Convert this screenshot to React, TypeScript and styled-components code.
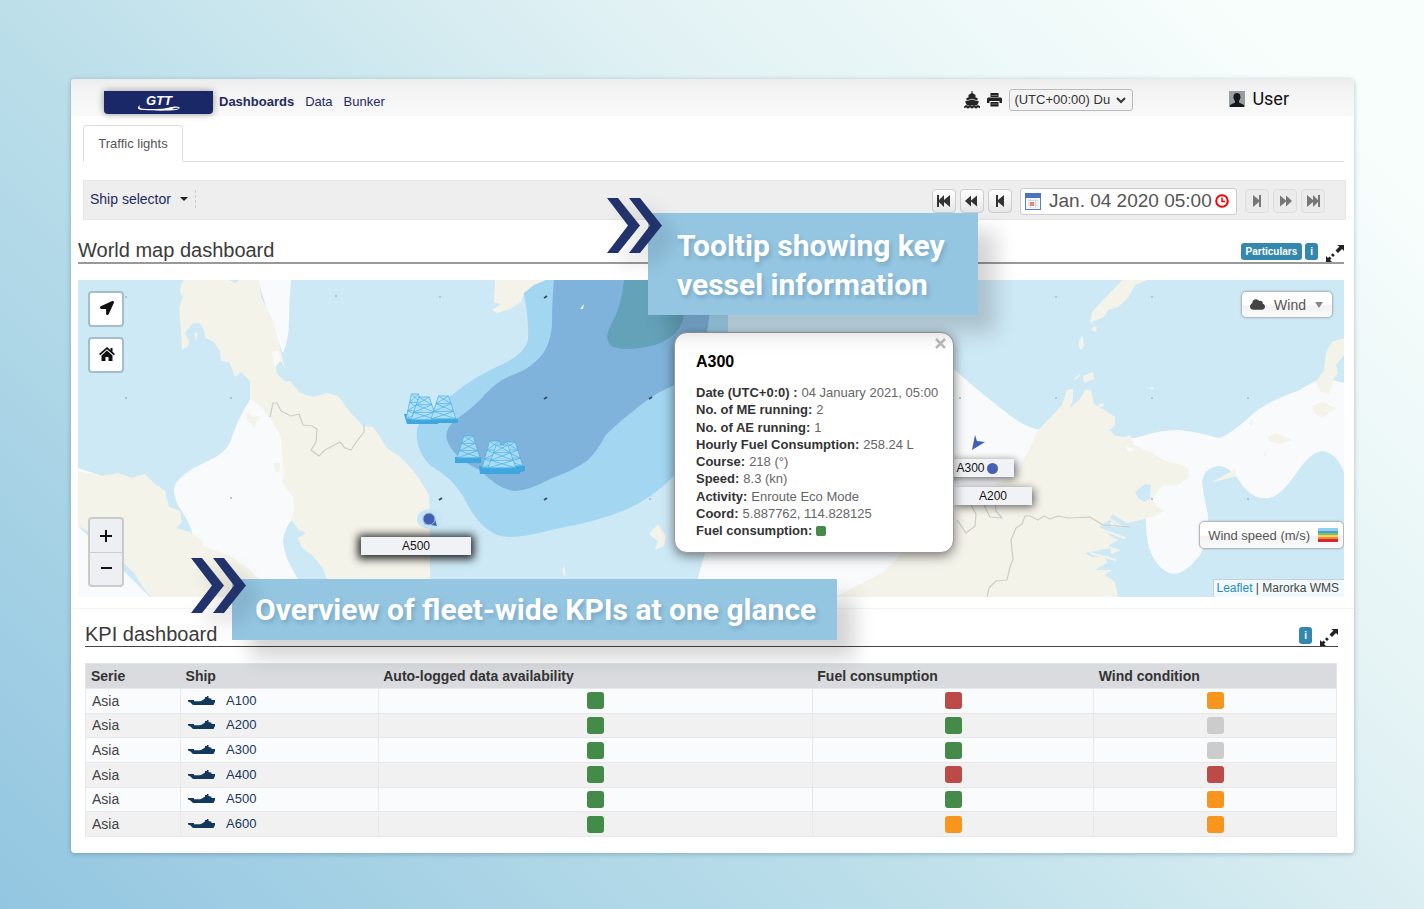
import React from "react";
import styled, { createGlobalStyle } from "styled-components";
import { FaLocationArrow, FaCloud } from "react-icons/fa";

const GlobalStyle = createGlobalStyle`
  *, *::before, *::after { box-sizing: border-box; }
  html { min-height: 100%; background: linear-gradient(45deg, #93c6e1 0%, #bcdfea 39%, #e2f2f4 66%, #f8fefc 92%); }
  body { margin: 0; font-family: "Liberation Sans", Arial, sans-serif; font-size: 14px; color: #333; }
  button, input, select { font-family: inherit; }
  h1, h2, h3, p, ul, dl, dd { margin: 0; padding: 0; font-weight: normal; }
  svg { display: block; }
`;

const Page = styled.div`
  padding: 79px 70px 56px 71px;
`;

const Card = styled.main`
  position: relative;
  background: #fff;
  border-radius: 4px;
  padding-bottom: 16px;
  box-shadow: 0 1px 5px rgba(40, 80, 100, 0.35);
`;

/* Header */

const Header = styled.header`
  display: flex;
  align-items: center;
  height: 37px;
  padding: 0 64px 0 33px;
  border-radius: 4px 4px 0 0;
  background: linear-gradient(#ededed, #f3f3f3 30%, #f9f9f9);
`;

const Logo = styled.a`
  display: flex;
  justify-content: center;
  width: 109px;
  height: 23px;
  margin: 9px 6px 0 0;
  border-radius: 0 0 4px 4px;
  background: #1a2868;
  box-shadow: 0 0 7px rgba(0, 0, 0, 0.4);
`;

const Nav = styled.nav`
  display: flex;
  gap: 11px;
  margin-top: 8px;
`;

const NavLink = styled.a<{ $active?: boolean }>`
  color: #1f2a60;
  font-size: 13px;
  line-height: 16px;
  text-decoration: none;
  font-weight: ${(p) => (p.$active ? "bold" : "normal")};
`;

const HeaderTools = styled.div`
  display: flex;
  align-items: center;
  gap: 7px;
  margin: 4px 96px 0 auto;
  color: #222;
`;

const PlainButton = styled.button`
  display: flex;
  padding: 0;
  border: 0;
  background: none;
  color: inherit;
`;

const SelectWrap = styled.span`
  display: flex;
  align-items: center;
  svg { margin: 0 7px 0 -17px; pointer-events: none; }
`;

const ZoneSelect = styled.select`
  appearance: none;
  width: 124px;
  height: 22px;
  padding: 0 18px 0 4px;
  border: 1px solid #bbb;
  border-radius: 3px;
  background: #f4f4f4;
  color: #333;
  font-size: 13px;
`;

const User = styled.button`
  display: flex;
  align-items: center;
  gap: 7px;
  margin: 2px 1px 0 0;
  padding: 0;
  border: 0;
  background: none;
  color: #111;
  font-family: Roboto, sans-serif;
  font-size: 18px;
  line-height: 20px;
`;

/* Tabs and toolbar */

const Tabs = styled.div`
  display: flex;
  margin: 9px 10px 0 12px;
  border-bottom: 1px solid #ddd;
`;

const Tab = styled.button`
  width: 100px;
  height: 37px;
  margin-bottom: -1px;
  padding: 0;
  border: 1px solid #ddd;
  border-bottom-color: #fff;
  border-radius: 4px 4px 0 0;
  background: #fff;
  color: #555;
  font-size: 13px;
`;

const Toolbar = styled.div`
  display: flex;
  align-items: center;
  height: 40px;
  margin: 18px 8px 0 12px;
  padding: 2px 20px 0 6px;
  border: 1px solid #e5e5e5;
  background: #eee;
`;

const ShipSelector = styled.button`
  display: flex;
  align-items: center;
  gap: 9px;
  height: 18px;
  margin-top: -4px;
  padding: 0 7px 0 0;
  border: 0;
  border-right: 1px dashed #ccc;
  background: none;
  color: #1f2a60;
  font-size: 14px;
`;

const StepGroup = styled.div<{ $start?: boolean }>`
  display: flex;
  gap: 4px;
  margin-left: ${(p) => (p.$start ? "auto" : "0")};
`;

const StepButton = styled.button`
  display: flex;
  align-items: center;
  justify-content: center;
  width: 24px;
  height: 24px;
  padding: 0;
  border: 1px solid #ccc;
  border-radius: 4px;
  background: linear-gradient(#fff, #e6e6e6);
  color: #333;
  &:disabled { background: #ebebeb; border-color: #ddd; color: #777; }
`;

const DateField = styled.label`
  display: flex;
  align-items: center;
  width: 217px;
  height: 27px;
  margin: 0 8px;
  padding: 0 7px 0 4px;
  border: 1px solid #ccc;
  border-radius: 3px;
  background: #fff;
`;

const DateInput = styled.input`
  flex: 1;
  min-width: 0;
  padding: 0 0 0 8px;
  border: 0;
  background: none;
  color: #555;
  font-size: 19px;
`;

/* Section headings */

const SectionHead = styled.div<{ $kpi?: boolean }>`
  display: flex;
  align-items: flex-end;
  gap: 3px;
  height: ${(p) => (p.$kpi ? "38px" : "44px")};
  margin: ${(p) => (p.$kpi ? "0 16px 0 14px" : "0 10px 0 7px")};
  border-bottom: ${(p) => (p.$kpi ? "1px solid #444" : "2px solid #999")};
`;

const SectionTitle = styled.h2`
  flex: 1;
  font-size: 20px;
  line-height: 24px;
  color: #3a3a3a;
`;

const Badge = styled.button`
  height: 17px;
  margin-bottom: 2px;
  padding: 0 5px;
  border: 0;
  border-radius: 3px;
  background: #3488ae;
  color: #fff;
  font-size: 10px;
  font-weight: bold;
  line-height: 17px;
`;

const ExpandButton = styled(PlainButton)`
  margin-left: 5px;
  color: #222;
`;

/* Map */

const MapPanel = styled.section`
  position: relative;
  height: 317px;
  margin: 16px 10px 11px 7px;
  overflow: hidden;
  background: #cee9f6;
`;

const MapDrawing = styled.svg`
  width: 100%;
  height: 100%;
`;

const MapControls = styled.div`
  position: absolute;
  top: 11px;
  left: 10px;
  bottom: 10px;
  display: flex;
  flex-direction: column;
  gap: 10px;
`;

const MapButton = styled.button`
  display: flex;
  align-items: center;
  justify-content: center;
  width: 36px;
  height: 36px;
  padding: 0 0 3px 1px;
  border: 2px solid #a3bfcd;
  border-radius: 4px;
  background: #fff;
  color: #111;
`;

const ZoomGroup = styled.div`
  display: flex;
  flex-direction: column;
  margin-top: auto;
  width: 36px;
  border: 2px solid #c9cbc6;
  border-radius: 4px;
  background: #eeeff2;
  overflow: hidden;
`;

const ZoomButton = styled.button`
  display: flex;
  align-items: center;
  justify-content: center;
  height: 33px;
  padding: 0;
  border: 0;
  background: none;
  & + & { border-top: 1px solid #ccc; }
`;

const FloatButton = styled.button`
  display: flex;
  align-items: center;
  border: 1px solid #b5b9bc;
  border-radius: 5px;
  background: linear-gradient(#fff 50%, #f2f2f2 55%, #fafafa);
  box-shadow: 0 0 2px rgba(0, 0, 0, 0.25);
  color: #555;
`;

const WindButton = styled(FloatButton)`
  position: absolute;
  top: 11px;
  right: 11px;
  height: 27px;
  gap: 9px;
  padding: 0 9px 0 8px;
  font-size: 14px;
`;

const LegendButton = styled(FloatButton)`
  position: absolute;
  top: 241px;
  right: 0;
  height: 28px;
  gap: 8px;
  padding: 0 5px 0 8px;
  font-size: 13px;
`;

const Attribution = styled.div`
  position: absolute;
  right: 0;
  bottom: 0;
  height: 18px;
  padding: 0 5px 0 3px;
  border: solid #c5cfd4;
  border-width: 1px 0 0 1px;
  background: #f1f9fc;
  font-size: 12px;
  line-height: 16px;
  color: #444;
  a { color: #2a8db5; text-decoration: none; }
`;

const ShipLabel = styled.div<{ $x: number; $y: number; $w: number; $dark?: boolean }>`
  position: absolute;
  left: ${(p) => p.$x}px;
  top: ${(p) => p.$y}px;
  display: flex;
  align-items: center;
  justify-content: center;
  gap: 2px;
  width: ${(p) => p.$w}px;
  height: 18px;
  background: #f1f2f5;
  color: #111;
  font-size: 12px;
  box-shadow: ${(p) => (p.$dark ? "0 1px 8px 3px rgba(0, 0, 0, 0.85)" : "2px 2px 8px rgba(0, 0, 0, 0.6)")};
`;

const ShipDot = styled.i`
  width: 11px;
  height: 11px;
  border-radius: 50%;
  background: #4460b0;
`;

const Popup = styled.article`
  position: absolute;
  left: 596px;
  top: 52px;
  width: 280px;
  height: 221px;
  padding: 20px 21px;
  border-radius: 13px;
  border: 1px solid #999;
  background: #fff;
  box-shadow: 0 3px 12px rgba(0, 0, 0, 0.5);
`;

const PopupTitle = styled.h3`
  margin-bottom: 13px;
  color: #000;
  font-size: 16px;
  font-weight: bold;
  line-height: 18px;
`;

const PopupClose = styled(PlainButton)`
  position: absolute;
  top: 5px;
  right: 7px;
  color: #bbb;
`;

const Facts = styled.dl`
  display: flex;
  flex-direction: column;
  justify-content: space-between;
  height: 155px;
`;

const Fact = styled.div`
  display: flex;
  align-items: center;
  gap: 4px;
  font-size: 13px;
  line-height: 17px;
  white-space: nowrap;
  dt { color: #333; font-weight: bold; }
  dd { color: #666; }
`;

/* KPI table */

const KpiSection = styled.section`
  border-top: 1px solid #f4f4f4;
`;

const TableWrap = styled.div`
  margin: 16px 17px 0 14px;
`;

const Table = styled.table`
  width: 100%;
  height: 174px;
  table-layout: fixed;
  border-collapse: collapse;
  border: 1px solid #e3e4e6;
`;

const HeadCell = styled.th<{ $w: string }>`
  width: ${(p) => p.$w};
  height: 25px;
  padding: 0 5px;
  background: #dadbdf;
  color: #333;
  font-size: 14px;
  line-height: 16px;
  text-align: left;
`;

const Row = styled.tr`
  background: #f9fbfd;
  &:nth-child(even) { background: #f1f1f2; }
`;

const Cell = styled.td`
  padding: 0 6px;
  border: 1px solid #e6e8ea;
  color: #444;
  font-size: 14px;
  line-height: 16px;
`;

const ShipLink = styled.a`
  display: flex;
  align-items: center;
  gap: 11px;
  color: #17365d;
  font-size: 13px;
  line-height: 16px;
  text-decoration: none;
`;

const Light = styled.span<{ $color: string; $small?: boolean }>`
  display: block;
  width: ${(p) => (p.$small ? "10px" : "17px")};
  height: ${(p) => (p.$small ? "10px" : "17px")};
  margin: 0 auto;
  border-radius: ${(p) => (p.$small ? "2px" : "3px")};
  background: ${(p) => p.$color};
`;

/* Callouts */

const Callout = styled.aside<{ $x: number; $y: number; $w: number; $pad: string }>`
  position: absolute;
  left: ${(p) => p.$x}px;
  top: ${(p) => p.$y}px;
  width: ${(p) => p.$w}px;
  padding: ${(p) => p.$pad};
  background: #94c6e2;
  box-shadow: 18px 18px 20px rgba(0, 0, 0, 0.17);
  color: #fff;
  font-family: Roboto, sans-serif;
  font-size: 30px;
  font-weight: bold;
  line-height: 39px;
  text-shadow: 2px 3px 4px rgba(60, 100, 130, 0.3);
`;

const Chevrons = styled.svg<{ $rise: number }>`
  position: absolute;
  left: -41px;
  top: ${(p) => -p.$rise}px;
  filter: drop-shadow(12px 12px 9px rgba(0, 0, 0, 0.16));
`;

type StepKind = "first" | "back" | "prev" | "next" | "forward" | "last";

const stepPaths: Record<StepKind, string> = {
  first: "M1 1h2v5l5-5v5l6-5v12l-6-5v5l-5-5v5h-2z",
  back: "M1 7l6-5.500v5l6-5v11l-6-5v5z",
  prev: "M4 1h2v5l6-5v12l-6-5v5h-2z",
  next: "M12 1h-2v5l-6-5v12l6-5v5h2z",
  forward: "M15 7l-6-5.500v5l-6-5v11l6-5v5z",
  last: "M15 1h-2v5l-5-5v5l-6-5v12l6-5v5l5-5v5h2z",
};

const StepIcon = ({ kind }: { kind: StepKind }) => (
  <svg width="16" height="14" viewBox="0 0 16 14" fill="currentColor"><path d={stepPaths[kind]} /></svg>
);

const ExpandIcon = () => (
  <svg width="18" height="18" viewBox="0 0 18 18" fill="currentColor">
    <path d="M11 1h7v6l-2-2-4 4-2.500-2.500 4-4zM0 12l2 2 1.500-1.500 2 2L4 16l2 2H0zM5 11l1.800-1.800 2 2L7 13z" />
  </svg>
);

const FleetIcon = () => (
  <svg width="16" height="18" viewBox="0 0 16 18" fill="currentColor">
    <path d="M7.500 0h1v2l3 2v2.500l2 .5v2.500L8 7.800 2.500 9.500V7l2-.5V4l3-2z" />
    <path d="M1 10.500l7-2 7 2-2 4H3z" />
    <path d="M0 16.500l2-1.500 2 1.500 2-1.500 2 1.500 2-1.500 2 1.500 2-1.500 2 1.500" fill="none" stroke="currentColor" strokeWidth="1.800" />
  </svg>
);

const PrintIcon = () => (
  <svg width="15" height="14" viewBox="0 0 15 14" fill="currentColor">
    <path d="M3.500 0h8v4h-8zM1 4.500h13l1 1V10h-2.500V8h-10v2H0V5.500zM3.500 9h8v4.500h-8z" />
    <path d="M4.500 2.500h6M4.500 11h6" stroke="#888" strokeWidth="0.800" />
  </svg>
);

const LogoDrawing = () => (
  <svg width="50" height="23" viewBox="0 0 50 23">
    <text x="12" y="14" fill="#fff" fontFamily="Liberation Sans, sans-serif" fontSize="13" fontWeight="bold" fontStyle="italic">GTT</text>
    <path d="M6 14c-4 3-2 5 4 5 8 .6 16 .8 26 .5 10 0 13-4 6-4-4 0-7 1.500-14 2.200-8 .6-14 .4-19 0-4-.5-4-2-3-3.700z" fill="#fff" />
    <path d="M38 18c3 .5 6 0 7-1-2-.6-5 0-7 1z" fill="#1a2868" />
  </svg>
);

const VesselIcon = () => (
  <svg width="28" height="12" viewBox="0 0 28 12">
    <path d="M1 5h6v1.200h6l2-.7 3-2V2h2V1h1.500v2l3 .8V5h3.500v2l-1.500 3H6L3.500 7.500 1 6.500z" fill="#12395b" />
  </svg>
);

const ChevronPair = ({ rise }: { rise: number }) => (
  <Chevrons $rise={rise} width="55" height="55" viewBox="0 0 55 55" fill="#22326b">
    <path d="M0 0h11l22 27.500L11 55H0l21-27.500zM22 0h11l22 27.500L33 55H22l21-27.500z" />
  </Chevrons>
);

const Tower = ({ x, y, w, h }: { x: number; y: number; w: number; h: number }) => {
  const px = (side: number, t: number) => x + w / 2 + side * (w / 5 + t * w * 0.3);
  const py = (t: number) => y + t * h;
  const d = `M${px(-1, 0)} ${py(0)}H${px(1, 0)}L${px(1, 1)} ${py(1)}H${px(-1, 1)}Z`;
  let braces = "";
  for (let i = 0; i < 3; i++) {
    const a = i / 3;
    const b = (i + 1) / 3;
    braces += `M${px(-1, a)} ${py(a)}L${px(1, b)} ${py(b)}M${px(1, a)} ${py(a)}L${px(-1, b)} ${py(b)}M${px(-1, b)} ${py(b)}H${px(1, b)}`;
  }
  return (
    <g stroke="#48b0e4" strokeWidth="0.700" fill="none">
      <path d={d} fill="#b2e0f7" fillOpacity="0.850" />
      <path d={braces} />
    </g>
  );
};

const faintDots = [[126, 297], [336, 296], [126, 398], [231, 398], [231, 498], [440, 297], [650, 499], [960, 398], [1056, 297], [1152, 297], [1056, 398], [1152, 398], [1248, 398], [1152, 499], [1248, 499]];
const windDots = [[545, 297], [545, 398], [650, 398], [440, 499], [545, 499]];

const MapArt = () => (
  <MapDrawing viewBox="78 280 1266 317" preserveAspectRatio="xMinYMid slice" aria-hidden="true">
    <rect x="78" y="280" width="2000" height="317" fill="#cee9f6" />
    <g fill="#f9fafc">
      <path d="M258 280H291Q289 300 289 320Q289 340 283 353L270 320Z" />
      <path d="M251 398Q237 420 231 440Q226 453 210 460Q174 476 174 490Q174 500 181 510Q191 524 194 540L230 597H310Q283 560 283 540Q284 530 292 519L305 470L284 420Z" />
      <path d="M78 468L102 476L78 490ZM78 526L150 597H78Z" />
      <path d="M693 597Q705 545 720 520L760 370H930Q945 360 956 371Q985 397 1015 419Q1030 429 1042 430L1112 435Q1128 441 1142 436Q1160 430 1178 430Q1195 431 1218 438Q1228 437 1255 412Q1265 403 1300 390Q1315 380 1325 378L1344 383V472Q1336 452 1322 451Q1312 452 1300 468Q1280 498 1268 498Q1252 500 1240 482Q1230 466 1218 466Q1204 468 1202 482Q1204 498 1208 515Q1209 540 1200 555Q1185 574 1174 574Q1158 572 1149 548Q1145 530 1146 510L1060 500L850 597Z" />
    </g>
    <path d="M545 280Q524 286 524 294Q529 320 528 340Q524 354 505 363Q470 379 455 393Q418 417 417 430Q415 451 431 466Q452 478 463 496Q483 538 510 537Q525 537 560 528Q595 522 625 510Q650 500 675 475Q728 425 728 350V280Z" fill="#a3d6f0" />
    <path d="M554 280Q552 300 552 325Q550 350 535 362Q527 370 510 376Q495 382 480 400Q470 410 455 420Q444 430 447 440Q453 458 480 470Q500 491 516 491Q530 490 550 479Q575 470 588 460Q598 450 605 436Q618 422 650 398Q660 391 690 378Q711 350 711 280Z" fill="#7fb3db" />
    <path d="M624 280Q622 305 612 323Q602 340 613 347Q628 352 655 345Q678 337 683 320L686 280Z" fill="#64a2b9" />
    <g fill="#f4f3ea">
      <path d="M184 280L181 285L180 292L183 297L179 308L181 330L182 350L188 346L189 341L185 333L190 327L193 323L200 323L204 330L205 338L213 341L220 351L221 361L229 362L233 371L235 377L241 372L250 381L250 398L260 406L272 421L281 437L282 455L284 475L282 482L293 497L294 512L291 520L299 530L306 533L298 538L302 548L312 555L323 568L332 597H430V515L429 495L420 480L411 468L400 457L387 448L380 437L373 427L363 426L350 412L338 396L327 393L313 397L300 393L291 382L287 375L283 360L277 335L272 318L266 307L261 297L259 280Z" />
      <path d="M78 471L102 476L118 473L132 478L145 474L155 484L165 491L169 507L180 511L182 522L176 528L190 532L202 540L203 546L230 556L250 570L275 597H151L142 586L135 574L125 564L100 538L78 526Z" />
      <path d="M495 280L494 302L501 304L492 310L497 313L510 309L521 302L524 293L534 285L546 280Z" />
      <path d="M1038 430L1050 418L1062 405L1067 390L1073 389L1073 399L1070 408L1080 399L1085 390L1091 390L1094 404L1106 411L1115 417L1115 425L1110 430L1115 436L1124 437L1130 435L1134 445L1150 452L1165 461L1183 465L1189 470L1188 478L1178 485L1162 486L1152 499L1157 507L1165 511L1155 516L1140 520L1127 523L1112 514L1110 520L1117 527L1103 527L1110 536L1118 540L1108 546L1120 550L1105 558L1112 570L1105 575L1115 582L1118 597H835L882 573L900 555L925 520L955 500L985 490L1015 475L1029 450Z" />
      <path d="M1090 323L1092 312L1105 298L1114 289L1122 280H1147L1135 285L1128 298L1118 307L1108 310L1104 317Z" />
      <path d="M1079 341L1082 335L1084 345L1082 350L1079 348ZM1094 326L1097 327L1096 332L1091 330ZM1083 376L1093 372L1094 379L1084 383ZM1074 379L1080 374L1080 376L1075 380ZM1149 388L1154 387L1153 390ZM1099 404L1104 403L1103 407L1098 407Z" />
      <path d="M1344 338L1332 342L1326 352L1324 370L1316 382L1320 392L1330 394L1333 380L1338 373L1336 365L1344 355Z" />
      <path d="M1312 406L1322 402L1336 408L1322 418L1314 413ZM1267 437L1276 433L1292 440L1280 444L1270 441ZM1212 482L1225 475L1235 469L1236 476L1222 480ZM1249 424L1253 419L1252 426ZM1263 453L1267 452L1266 456Z" />
      <path d="M246 412L254 417L260 416L256 422L255 428L247 420ZM274 463L280 463L280 471L275 473ZM649 534L658 524L666 536L664 546L655 550L658 541ZM564 565L566 577L562 572ZM194 333L198 332L196 341Z" />
    </g>
    <path d="M580 309L584 304L583 309Z" fill="#f4f3ea" />
    <path d="M272 352L279 351L280 360L275 367ZM1125 445L1135 450L1128 452Z" fill="#f9fafc" />
    <path d="M276 366L281 361L288 374L293 380L286 382L277 374ZM1135 492L1145 484L1151 485L1150 499L1144 502L1138 498ZM229 280H240L235 283ZM1099 527L1112 518L1109 532ZM1085 553L1110 548L1112 556L1092 557ZM1095 570L1112 560L1114 570Z" fill="#cee9f6" />
    <path d="M1110 519L1122 527M1103 530L1125 538M1090 553L1116 560" stroke="#f4f3ea" strokeWidth="2" />
    <g fill="none" stroke="#cdcdc5" strokeWidth="1.200" strokeLinejoin="round">
      <path d="M270 417L273 403H277L281 411L291 416L299 414L303 425L312 426L317 429L316 442L311 450L319 456L325 450L340 442L345 448L351 450L357 441L364 432V425" />
      <path d="M987 597L989 588L996 581L1007 580L1010 567L1013 559L1011 540L1016 528L1022 524L1025 516L1030 516L1038 520L1044 516L1050 519L1058 516L1068 518L1090 517L1103 525L1130 527" />
      <path d="M957 520L966 533L975 526L976 514L971 505M984 505L990 517L1002 518L996 511L995 503" />
    </g>
    <g fill="#9cb6c0">{faintDots.map(([x, y]) => <circle key={`${x}-${y}`} cx={x} cy={y} r="1" />)}</g>
    <g stroke="#35515f" strokeWidth="2">{windDots.map(([x, y]) => <path key={`${x}-${y}`} d={`M${x - 1} ${y + 1}l3 -2`} />)}</g>
    <path d="M404 414h5v5h49v4H438v1H407zM455 457h26v6H455zM479 466h46v5l-5 1v2H480z" fill="#3fa6df" />
    <Tower x={406} y={394} w={18} h={25} />
    <Tower x={411} y={397} w={26} h={23} />
    <Tower x={431} y={396} w={25} h={23} />
    <Tower x={457} y={436} w={23} h={22} />
    <Tower x={482} y={441} w={25} h={27} />
    <Tower x={497} y={442} w={26} h={24} />
    <Tower x={488} y={445} w={28} h={23} />
    <ellipse cx="430" cy="519" rx="13" ry="10" fill="#c6e6f7" />
    <path d="M424 524l13 2-3-10z" fill="#4460b0" />
    <circle cx="429" cy="519" r="6" fill="#4460b0" stroke="#a9b9df" />
    <path d="M975 435l2 6 8 1-13 8z" fill="#4460b0" />
  </MapDrawing>
);

const facts: [string, string][] = [
  ["Date (UTC+0:0) :", "04 January 2021, 05:00"],
  ["No. of ME running:", "2"],
  ["No. of AE running:", "1"],
  ["Hourly Fuel Consumption:", "258.24 L"],
  ["Course:", "218 (°)"],
  ["Speed:", "8.3 (kn)"],
  ["Activity:", "Enroute Eco Mode"],
  ["Coord:", "5.887762, 114.828125"],
];

const green = "#448a48";
const red = "#bc4b48";
const orange = "#f8951d";
const grey = "#cccccc";

const ships = [
  { name: "A100", lights: [green, red, orange] },
  { name: "A200", lights: [green, green, grey] },
  { name: "A300", lights: [green, green, grey] },
  { name: "A400", lights: [green, red, red] },
  { name: "A500", lights: [green, green, orange] },
  { name: "A600", lights: [green, orange, orange] },
];

const columns: [string, string][] = [
  ["Serie", "7.6%"],
  ["Ship", "15.8%"],
  ["Auto-logged data availability", "34.7%"],
  ["Fuel consumption", "22.5%"],
  ["Wind condition", "19.4%"],
];

export default function App() {
  return (
    <>
      <GlobalStyle />
      <Page>
        <Card>
          <Header>
            <Logo href="#home" aria-label="GTT"><LogoDrawing /></Logo>
            <Nav>
              <NavLink href="#dashboards" $active>Dashboards</NavLink>
              <NavLink href="#data">Data</NavLink>
              <NavLink href="#bunker">Bunker</NavLink>
            </Nav>
            <HeaderTools>
              <PlainButton aria-label="Fleet"><FleetIcon /></PlainButton>
              <PlainButton aria-label="Print"><PrintIcon /></PlainButton>
              <SelectWrap>
                <ZoneSelect aria-label="Time zone" defaultValue="utc">
                  <option value="utc">(UTC+00:00) Du</option>
                </ZoneSelect>
                <svg width="10" height="8" viewBox="0 0 10 8" fill="none" stroke="#333" strokeWidth="2"><path d="M1 2l4 4 4-4" /></svg>
              </SelectWrap>
            </HeaderTools>
            <User>
              <svg width="16" height="16" viewBox="0 0 16 16">
                <rect width="16" height="16" fill="#999ea3" />
                <path d="M1 16v-2l5-2.500V10C3.500 7 4 2 8 2s4.500 5 2 8v1.500l5 2.500v2z" fill="#15181b" />
              </svg>
              User
            </User>
          </Header>

          <Tabs><Tab>Traffic lights</Tab></Tabs>

          <Toolbar>
            <ShipSelector>
              Ship selector
              <svg width="8" height="4" viewBox="0 0 8 4"><path d="M0 0h8L4 4z" fill="#222" /></svg>
            </ShipSelector>
            <StepGroup $start>
              <StepButton aria-label="First"><StepIcon kind="first" /></StepButton>
              <StepButton aria-label="Fast back"><StepIcon kind="back" /></StepButton>
              <StepButton aria-label="Previous"><StepIcon kind="prev" /></StepButton>
            </StepGroup>
            <DateField>
              <svg width="16" height="17" viewBox="0 0 16 17">
                <rect x="0.500" y="0.500" width="15" height="16" fill="#f4f6fb" stroke="#5b7fc0" />
                <rect width="16" height="5" fill="#4a74bd" />
                <path d="M3 7.500h10M3 10h10M3 12.500h10M5.500 6v9M10.500 6v9" stroke="#d2d8e4" />
                <rect x="5" y="9" width="4" height="4" fill="#e08a70" />
              </svg>
              <DateInput aria-label="Date and time" defaultValue="Jan. 04 2020 05:00" />
              <svg width="14" height="14" viewBox="0 0 14 14" fill="none" stroke="#f00" strokeWidth="2"><circle cx="7" cy="7" r="5.800" /><path d="M7 3.500V7.500H10" strokeWidth="1.500" /></svg>
            </DateField>
            <StepGroup>
              <StepButton disabled aria-label="Next"><StepIcon kind="next" /></StepButton>
              <StepButton disabled aria-label="Fast forward"><StepIcon kind="forward" /></StepButton>
              <StepButton disabled aria-label="Last"><StepIcon kind="last" /></StepButton>
            </StepGroup>
          </Toolbar>

          <SectionHead>
            <SectionTitle>World map dashboard</SectionTitle>
            <Badge>Particulars</Badge>
            <Badge>i</Badge>
            <ExpandButton aria-label="Expand map"><ExpandIcon /></ExpandButton>
          </SectionHead>

          <MapPanel aria-label="World map">
            <MapArt />
            <MapControls>
              <MapButton aria-label="Locate"><FaLocationArrow size={14} /></MapButton>
              <MapButton aria-label="Home">
                <svg width="16" height="14" viewBox="0 0 16 14"><path d="M8 0L0 7l1.200 1.200L8 2.300l6.800 5.900L16 7l-2.500-2.200V1h-2v2zM8 3.600L2.500 8.400V14h4v-4h3v4h4V8.400z" fill="currentColor" /></svg>
              </MapButton>
              <ZoomGroup>
                <ZoomButton aria-label="Zoom in"><svg width="14" height="14" viewBox="0 0 14 14" stroke="#111" strokeWidth="2"><path d="M1 7h12M7 1v12" /></svg></ZoomButton>
                <ZoomButton aria-label="Zoom out"><svg width="12" height="14" viewBox="0 0 12 14" stroke="#111" strokeWidth="2"><path d="M1 6h11" /></svg></ZoomButton>
              </ZoomGroup>
            </MapControls>
            <ShipLabel $x={283} $y={257} $w={110} $dark>A500</ShipLabel>
            <ShipLabel $x={862} $y={179} $w={74}>A300<ShipDot /></ShipLabel>
            <ShipLabel $x={876} $y={207} $w={78}>A200</ShipLabel>
            <Popup>
              <PopupClose aria-label="Close">
                <svg width="11" height="11" viewBox="0 0 11 11" stroke="currentColor" strokeWidth="2.500"><path d="M1 1l9 9M10 1l-9 9" /></svg>
              </PopupClose>
              <PopupTitle>A300</PopupTitle>
              <Facts>
                {facts.map(([name, value]) => <Fact key={name}><dt>{name}</dt><dd>{value}</dd></Fact>)}
                <Fact><dt>Fuel consumption:</dt><dd><Light $color={green} $small /></dd></Fact>
              </Facts>
            </Popup>
            <WindButton>
              <FaCloud size={15} color="#444" />
              Wind
              <svg width="8" height="6" viewBox="0 0 8 6"><path d="M0 0h8L4 6z" fill="#888" /></svg>
            </WindButton>
            <LegendButton>
              Wind speed (m/s)
              <svg width="20" height="14" viewBox="0 0 20 14">
                <rect width="20" height="14" fill="#8fd0f2" />
                <rect y="3" width="20" height="11" fill="#4b9fc0" />
                <rect y="5" width="20" height="9" fill="#7cc06a" />
                <rect y="7" width="20" height="7" fill="#f3d45a" />
                <rect y="9" width="20" height="5" fill="#ee8a3c" />
                <rect y="11" width="20" height="3" fill="#d4272e" />
              </svg>
            </LegendButton>
            <Attribution><a href="#leaflet">Leaflet</a> | Marorka WMS</Attribution>
          </MapPanel>

          <KpiSection>
            <SectionHead $kpi>
              <SectionTitle>KPI dashboard</SectionTitle>
              <Badge>i</Badge>
              <ExpandButton aria-label="Expand table"><ExpandIcon /></ExpandButton>
            </SectionHead>
            <TableWrap>
              <Table>
                <thead>
                  <tr>{columns.map(([name, width]) => <HeadCell key={name} $w={width} scope="col">{name}</HeadCell>)}</tr>
                </thead>
                <tbody>
                  {ships.map((ship) => (
                    <Row key={ship.name}>
                      <Cell>Asia</Cell>
                      <Cell><ShipLink href={`#${ship.name}`}><VesselIcon />{ship.name}</ShipLink></Cell>
                      {ship.lights.map((color, i) => <Cell key={i}><Light $color={color} /></Cell>)}
                    </Row>
                  ))}
                </tbody>
              </Table>
            </TableWrap>
          </KpiSection>

          <Callout $x={577} $y={134} $w={330} $pad="13px 20px 11px 29px">
            <ChevronPair rise={15} />
            Tooltip showing key vessel information
          </Callout>
          <Callout $x={161} $y={500} $w={605} $pad="11px 10px 11px 23px">
            <ChevronPair rise={21} />
            Overview of fleet-wide KPIs at one glance
          </Callout>
        </Card>
      </Page>
    </>
  );
}
